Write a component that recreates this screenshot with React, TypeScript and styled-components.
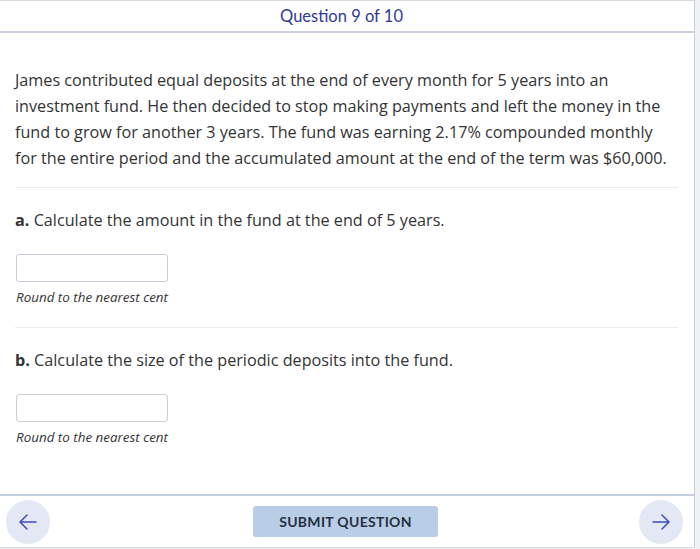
import styled, { createGlobalStyle } from 'styled-components';

const GlobalStyle = createGlobalStyle`
  html, body {
    margin: 0;
    padding: 0;
    background: #eef1f8;
  }
  * {
    box-sizing: border-box;
  }
`;

const parts = [
  { label: 'a.', text: 'Calculate the amount in the fund at the end of 5 years.' },
  { label: 'b.', text: 'Calculate the size of the periodic deposits into the fund.' },
];

const ArrowIcon = ({ dir }: { dir: 'left' | 'right' }) => (
  <svg width="20" height="20" viewBox="0 0 20 20" fill="none">
    {dir === 'left' ? (
      <path d="M18 10H2M9 3l-7 7 7 7" stroke="#3d4bc4" strokeWidth="1.5" strokeLinecap="round" strokeLinejoin="round" />
    ) : (
      <path d="M2 10h16M11 3l7 7-7 7" stroke="#3d4bc4" strokeWidth="1.5" strokeLinecap="round" strokeLinejoin="round" />
    )}
  </svg>
);

const App = () => {
  return (
    <>
      <GlobalStyle />
      <Page>
        <Header>Question 9 of 10</Header>

        <Body>
          <Intro>
            <IntroText>
              James contributed equal deposits at the end of every month for 5 years into an investment fund. He
              then decided to stop making payments and left the money in the fund to grow for another 3 years. The
              fund was earning 2.17% compounded monthly for the entire period and the accumulated amount at the end
              of the term was $60,000.
            </IntroText>
          </Intro>

          {parts.map((p) => (
            <Part key={p.label}>
              <Prompt>
                <b>{p.label}</b> {p.text}
              </Prompt>
              <AnswerInput type="text" />
              <Hint>Round to the nearest cent</Hint>
            </Part>
          ))}
        </Body>

        <Footer>
          <NavButton aria-label="Previous">
            <ArrowIcon dir="left" />
          </NavButton>
          <SubmitButton>SUBMIT QUESTION</SubmitButton>
          <NavButton aria-label="Next">
            <ArrowIcon dir="right" />
          </NavButton>
        </Footer>
      </Page>
    </>
  );
};

const Page = styled.div`
  width: 695px;
  height: 548px;
  display: flex;
  flex-direction: column;
  background: #fff;
  border-top: 1px solid #d5dae5;
  border-right: 1px solid #c9cfdc;
`;

const Header = styled.header`
  height: 32px;
  flex-shrink: 0;
  display: flex;
  align-items: center;
  justify-content: center;
  padding-right: 11px;
  border-bottom: 2px solid #c9d1e2;
  font-family: Lato, 'Liberation Sans', sans-serif;
  font-size: 16.5px;
  color: #2f3a94;
`;

const Body = styled.main`
  flex: 1;
  padding: 34px 16px 0 15px;
  font-family: 'Open Sans', 'Liberation Sans', sans-serif;
  color: #333;
`;

const Intro = styled.div`
  padding-bottom: 16px;
  border-bottom: 1px solid #ececef;
`;

const IntroText = styled.p`
  max-width: 652px;
  margin: 0;
  font-size: 16.2px;
  line-height: 26px;
`;

const Part = styled.section`
  padding-top: 19px;
  padding-bottom: 21px;

  & + & {
    border-top: 1px solid #ececef;
  }
`;

const Prompt = styled.p`
  margin: 0 0 21px;
  font-size: 16.2px;
  line-height: 26px;

  b {
    font-weight: 700;
  }
`;

const AnswerInput = styled.input`
  display: block;
  width: 152px;
  height: 28px;
  margin-left: 1px;
  border: 1.5px solid #c6ccd9;
  border-radius: 3px;
  background: #fff;
  outline: none;
`;

const Hint = styled.p`
  margin: 6px 0 0 1px;
  font-size: 13.4px;
  font-style: italic;
  line-height: 18px;
`;

const Footer = styled.footer`
  height: 54px;
  flex-shrink: 0;
  display: flex;
  align-items: center;
  justify-content: space-between;
  padding: 0 11px 0 6px;
  border-top: 2px solid #c6cfe0;
  border-bottom: 1px solid #d7dce6;
`;

const NavButton = styled.button`
  width: 44px;
  height: 44px;
  border: none;
  border-radius: 50%;
  background: #e3e8f4;
  display: flex;
  align-items: center;
  justify-content: center;
  padding: 0;
`;

const SubmitButton = styled.button`
  width: 185px;
  height: 31px;
  margin-left: 2px;
  border: none;
  border-radius: 3px;
  background: #b9cde7;
  font-family: Lato, 'Liberation Sans', sans-serif;
  font-size: 14px;
  font-weight: 700;
  letter-spacing: 0.3px;
  color: #27303f;
`;

export default App;
